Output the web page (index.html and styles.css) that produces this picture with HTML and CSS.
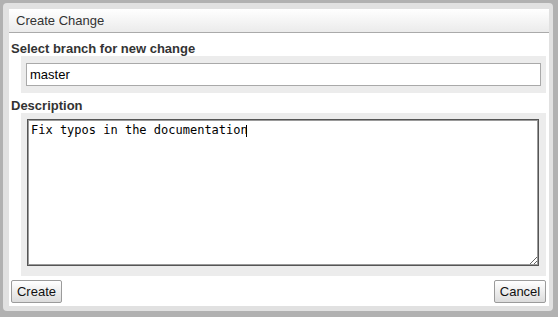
FILE: index.html
```html
<!DOCTYPE html>
<html>
<head>
<meta charset="utf-8">
<link rel="stylesheet" href="styles.css">
</head>
<body>
<div class="frame">
  <div class="dialog">
    <div class="titlebar">Create Change</div>
    <div class="content">
      <div class="label first">Select branch for new change</div>
      <div class="band">
        <input class="branch" type="text" value="master">
      </div>
      <div class="label">Description</div>
      <div class="band band-desc">
        <div class="ta-wrap">
          <textarea class="desc">Fix typos in the documentation</textarea>
          <span class="caret"></span>
        </div>
      </div>
      <div class="buttons">
        <button class="btn">Create</button>
        <button class="btn">Cancel</button>
      </div>
    </div>
  </div>
</div>
</body>
</html>
```
FILE: styles.css
```css
html, body {
  margin: 0;
  padding: 0;
}
body {
  background: #b1b1b1;
  width: 558px;
  height: 317px;
  overflow: hidden;
  font-family: "Liberation Sans", Arial, sans-serif;
  font-size: 13px;
  color: #333;
}
.frame {
  margin: 3px 5px 0 3px;
  height: 308px;
  box-sizing: border-box;
  background: #e1e1e1;
  border-radius: 4px;
  padding: 6px 4px 5px 6px;
}
.dialog {
  background: #fff;
  height: 297px;
  display: flex;
  flex-direction: column;
}
.titlebar {
  height: 23px;
  line-height: 24px;
  padding-left: 7px;
  background: linear-gradient(#ffffff, #ebebeb);
  border-bottom: 1px solid #aaaaaa;
  color: #333;
}
.content {
  flex: 1;
  display: flex;
  flex-direction: column;
  padding: 0 3px 0 2px;
}
.label {
  font-weight: bold;
  line-height: 15px;
  margin-top: 5px;
  margin-bottom: 0;
}
.label.first {
  margin-top: 8px;
  margin-bottom: 0;
}
.band {
  background: #ececec;
  margin-left: 10px;
  padding: 7px 5px;
}
.branch {
  display: block;
  box-sizing: border-box;
  width: 100%;
  height: 23px;
  margin: 0;
  border: 1px solid #a9a9a9;
  padding: 0 3px;
  font-family: "Liberation Sans", Arial, sans-serif;
  font-size: 13px;
  color: #000;
  background: #fff;
  outline: none;
}
.band-desc {
  padding: 6px 7px 10px 6px;
}
.ta-wrap {
  position: relative;
}
.desc {
  display: block;
  box-sizing: border-box;
  width: 100%;
  height: 147px;
  margin: 0;
  border: 1px solid #555;
  box-shadow: inset 1px 1px 0 #9a9a9a, inset -1px -1px 0 #9a9a9a;
  padding: 3px 2px 2px 3px;
  font-family: "DejaVu Sans Mono", monospace;
  font-size: 12px;
  line-height: 15px;
  color: #000;
  background: #fff;
  resize: both;
  outline: none;
}
.caret {
  position: absolute;
  left: 219px;
  top: 6px;
  width: 1px;
  height: 12px;
  background: #000;
}
.buttons {
  display: flex;
  justify-content: space-between;
  margin-top: 4px;
}
.btn {
  height: 23px;
  width: 51px;
  padding: 0;
  margin: 0;
  border: 1px solid #9b9b9b;
  border-radius: 2px;
  background: linear-gradient(#ffffff, #dcdcdc);
  font-family: "Liberation Sans", Arial, sans-serif;
  font-size: 13px;
  color: #111;
}
.btn:last-child {
  width: 52px;
}
```
